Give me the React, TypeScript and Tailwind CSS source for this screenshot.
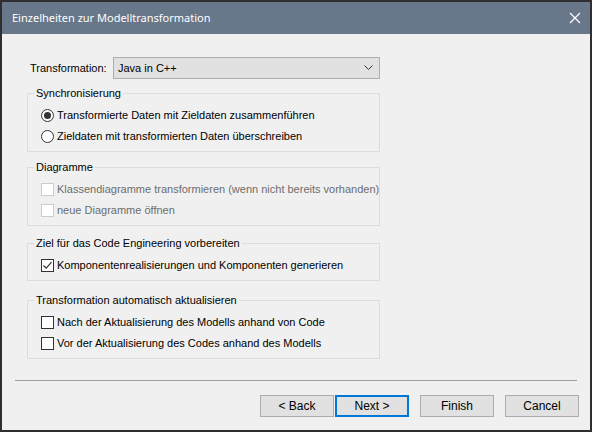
import React from 'react';

const font = { fontFamily: '"Liberation Sans", Arial, sans-serif' };

function Radio({ checked, label }: { checked?: boolean; label: string }) {
  return (
    <div className="flex items-center h-[21px] pl-[13px]">
      <span className="w-[13px] h-[13px] rounded-full border border-[#333333] bg-white flex items-center justify-center shrink-0">
        {checked && <span className="w-[7px] h-[7px] rounded-full bg-[#333333]" />}
      </span>
      <span className="ml-[3px] text-[11px] text-black whitespace-nowrap">{label}</span>
    </div>
  );
}

function Check({ checked, disabled, label }: { checked?: boolean; disabled?: boolean; label: string }) {
  return (
    <div className="flex items-center h-[21px] pl-[13px]">
      <span
        className={`w-[13px] h-[13px] border bg-white flex items-center justify-center shrink-0 ${
          disabled ? 'border-[#cccccc]' : 'border-[#333333]'
        }`}
      >
        {checked && (
          <svg width="11" height="11" viewBox="0 0 11 11" fill="none">
            <path d="M1.5 5.5 L4.2 8.2 L9.5 2.2" stroke="#333333" strokeWidth="1.2" />
          </svg>
        )}
      </span>
      <span className={`ml-[3px] text-[11px] whitespace-nowrap ${disabled ? 'text-[#6d6d6d]' : 'text-black'}`}>
        {label}
      </span>
    </div>
  );
}

function Group({ title, children, className = '' }: { title: string; children: React.ReactNode; className?: string }) {
  return (
    <fieldset className={`border border-[#dcdcdc] w-[353px] pb-[4px] ${className}`}>
      <legend className="ml-[6px] px-[2px] text-[11px] leading-[14px] text-black whitespace-nowrap">{title}</legend>
      <div className="mt-[5px]">{children}</div>
    </fieldset>
  );
}

function Button({ label, active }: { label: string; active?: boolean }) {
  return (
    <button
      className={`w-[74px] h-[22px] bg-[#e1e1e1] text-[12px] text-black flex items-center justify-center ${
        active ? 'border-2 border-[#0078d7]' : 'border border-[#adadad]'
      }`}
    >
      {label}
    </button>
  );
}

export default function App() {
  return (
    <div className="w-[592px] h-[432px] border-2 border-[#2f2f2f] bg-[#f0f0f0] flex flex-col" style={font}>
      {/* Title bar */}
      <div className="h-[32px] bg-[#687789] flex items-center justify-between pl-[10px] pr-[9px] shrink-0">
        <span className="text-white text-[11px]" style={{ fontFamily: '"Noto Sans", "Open Sans", sans-serif' }}>
          Einzelheiten zur Modelltransformation
        </span>
        <svg width="12" height="12" viewBox="0 0 12 12" fill="none">
          <path d="M1 1 L11 11 M11 1 L1 11" stroke="white" strokeWidth="1.2" />
        </svg>
      </div>

      {/* Body */}
      <div className="flex flex-col pl-[25px] pt-[23px]">
        <div className="flex items-center">
          <span className="w-[86px] pl-[3px] text-[11px] text-black whitespace-nowrap">Transformation:</span>
          <div className="w-[267px] h-[22px] bg-[#e1e1e1] border border-[#adadad] flex items-center justify-between pl-[4px] pr-[6px]">
            <span className="text-[11px] text-black">Java in C++</span>
            <svg width="9" height="6" viewBox="0 0 9 6" fill="none">
              <path d="M0.5 0.5 L4.5 4.5 L8.5 0.5" stroke="#333333" strokeWidth="1" />
            </svg>
          </div>
        </div>

        <Group title="Synchronisierung" className="mt-[7px]">
          <Radio checked label="Transformierte Daten mit Zieldaten zusammenführen" />
          <Radio label="Zieldaten mit transformierten Daten überschreiben" />
        </Group>

        <Group title="Diagramme" className="mt-[8px]">
          <Check disabled label="Klassendiagramme transformieren (wenn nicht bereits vorhanden)" />
          <Check disabled label="neue Diagramme öffnen" />
        </Group>

        <Group title="Ziel für das Code Engineering vorbereiten" className="mt-[10px]">
          <Check checked label="Komponentenrealisierungen und Komponenten generieren" />
        </Group>

        <Group title="Transformation automatisch aktualisieren" className="mt-[12px]">
          <Check label="Nach der Aktualisierung des Modells anhand von Code" />
          <Check label="Vor der Aktualisierung des Codes anhand des Modells" />
        </Group>
      </div>

      {/* Footer */}
      <div className="mt-auto pb-[13px] flex flex-col">
        <div className="mx-[13px] h-px bg-[#a0a0a0]" />
        <div className="flex justify-end items-center pr-[11px] mt-[14px]">
          <Button label="< Back" />
          <div className="ml-px">
            <Button label="Next >" active />
          </div>
          <div className="ml-[11px]">
            <Button label="Finish" />
          </div>
          <div className="ml-[11px]">
            <Button label="Cancel" />
          </div>
        </div>
      </div>
    </div>
  );
}
